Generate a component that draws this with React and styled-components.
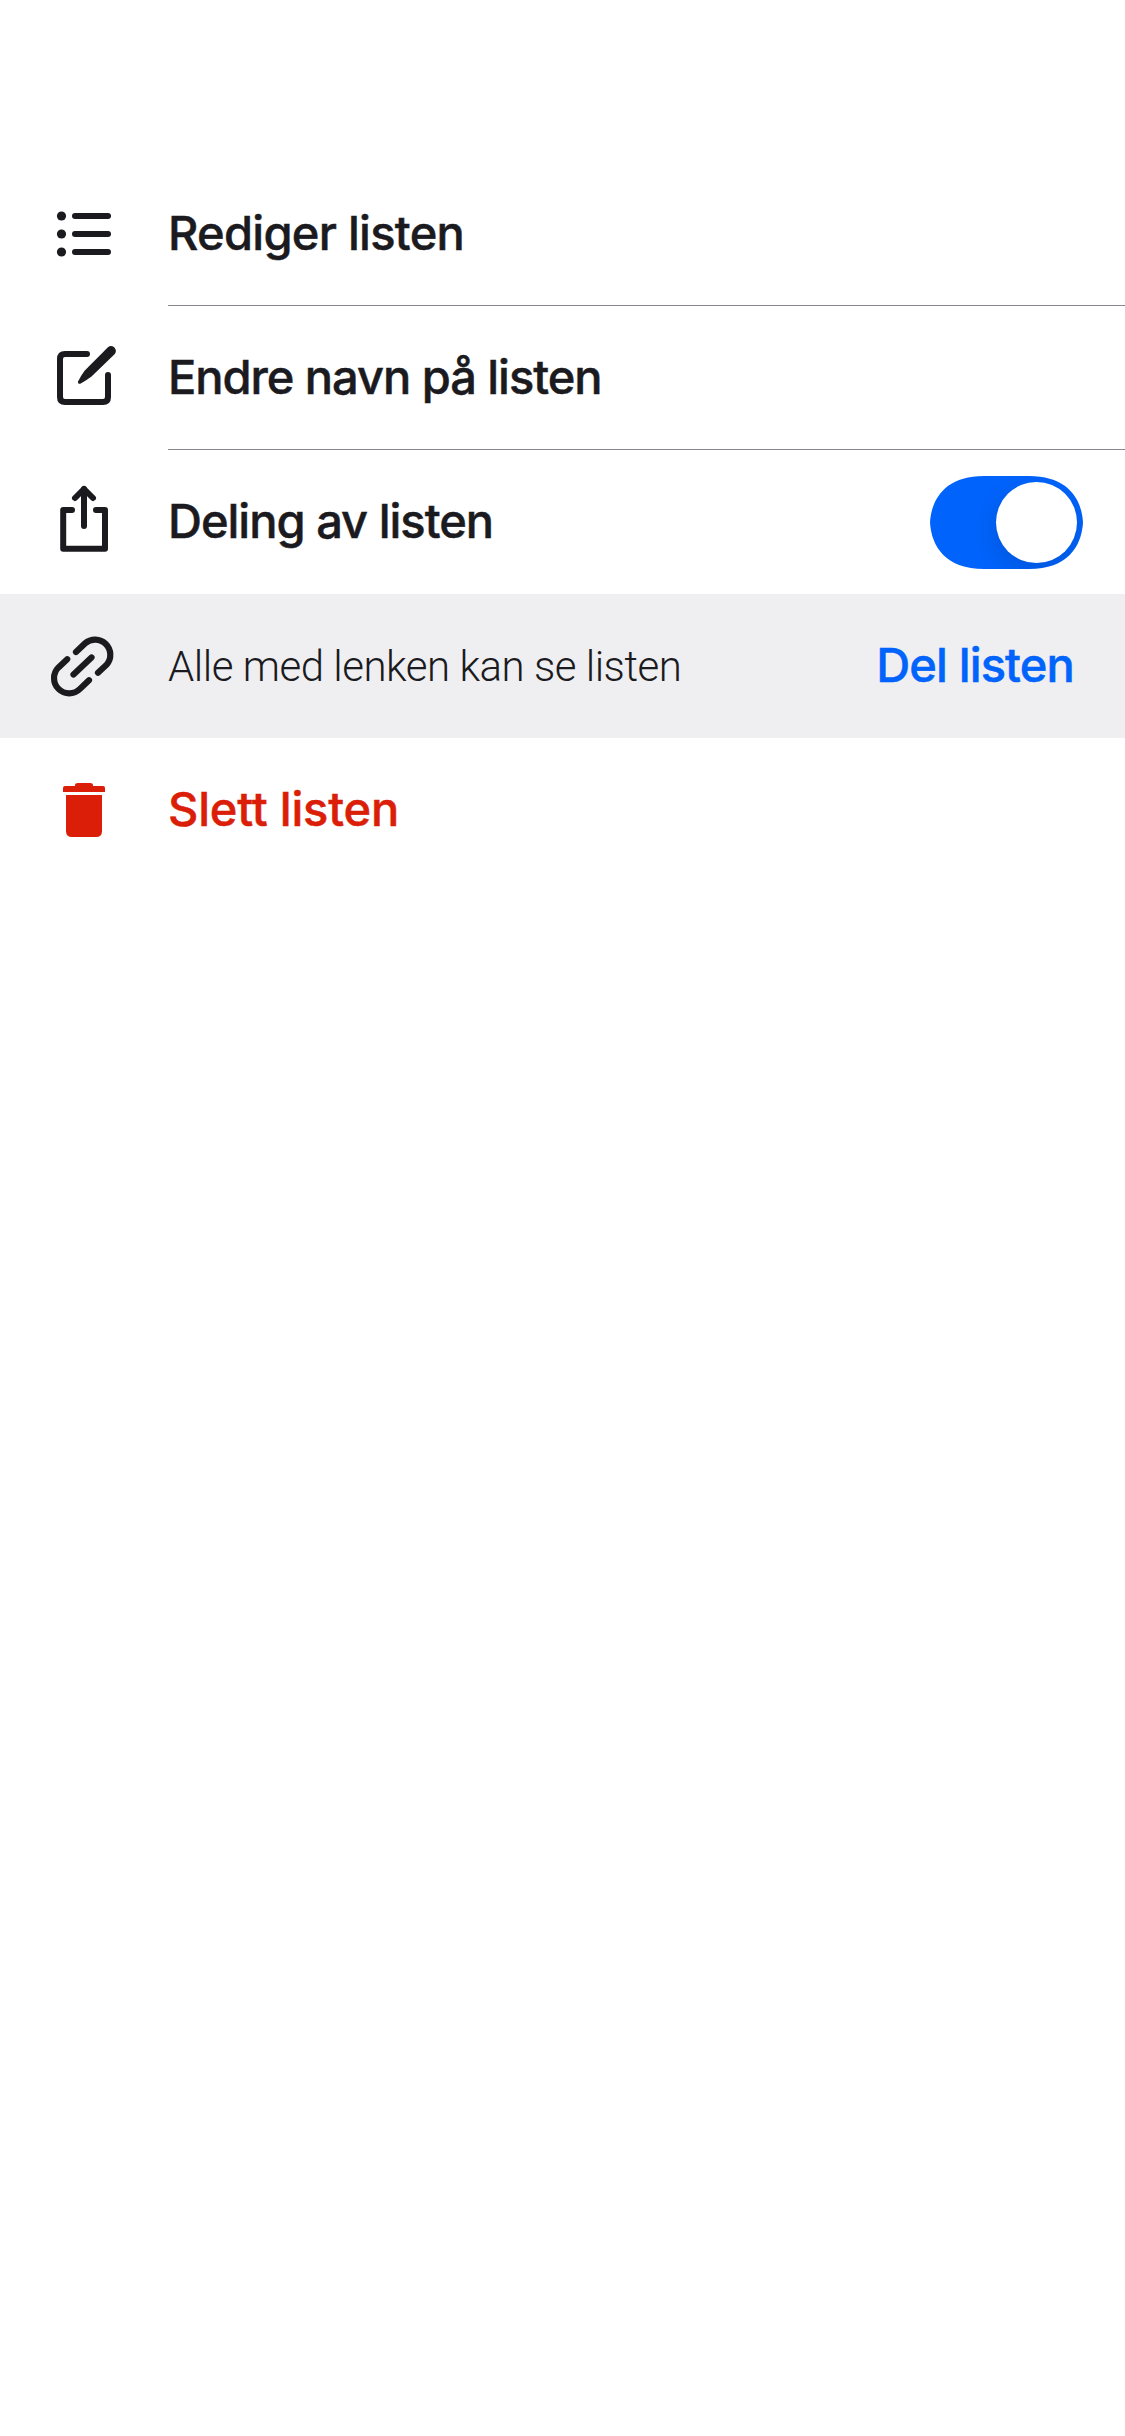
import React, { useState } from "react";
import styled, { createGlobalStyle } from "styled-components";

const GlobalStyle = createGlobalStyle`
  * { box-sizing: border-box; }
  body { margin: 0; background: #fff; }
`;

const Screen = styled.main`
  min-height: 2436px;
  padding-top: 162px;
  background: #fff;
  color: #1b1b1f;
  font-family: Inter, "Liberation Sans", sans-serif;
`;

const Menu = styled.ul`
  display: flex;
  flex-direction: column;
  margin: 0;
  padding: 0;
  list-style: none;
`;

const Row = styled.li`
  display: grid;
  grid-template-columns: 168px 1fr;
  height: 144px;
  color: ${(p) => (p.$danger ? "#da1e08" : "inherit")};
  background: ${(p) => (p.$shaded ? "#efeff1" : "transparent")};
`;

const IconCell = styled.div`
  display: flex;
  align-items: center;
  padding-left: 40px;

  svg {
    display: block;
    width: 90px;
    height: 90px;
  }
`;

const Content = styled.div`
  display: flex;
  align-items: center;
  justify-content: space-between;
  padding-right: ${(p) => p.$end || 0}px;
  border-bottom: ${(p) => (p.$divided ? "1px solid #87878e" : "0")};
`;

const Label = styled.span`
  padding-bottom: 2px;
  font-size: 47px;
  line-height: 60px;
  font-weight: 500;
  letter-spacing: ${(p) => p.$tracking || 0}px;
  -webkit-text-stroke: 0.5px currentColor;
  white-space: nowrap;
`;

const Note = styled.span`
  padding-top: 1px;
  font-family: Roboto, "Liberation Sans", sans-serif;
  font-size: 42px;
  line-height: 60px;
  font-weight: 300;
  letter-spacing: -0.48px;
  white-space: nowrap;
`;

const LinkButton = styled.button`
  padding: 0 0 2px;
  border: 0;
  background: none;
  color: #0063fb;
  font: 500 47px/60px Inter, "Liberation Sans", sans-serif;
  letter-spacing: -0.85px;
  -webkit-text-stroke: 0.5px currentColor;
  white-space: nowrap;
`;

const Switch = styled.button`
  display: flex;
  justify-content: ${(p) => (p.$on ? "flex-end" : "flex-start")};
  align-items: center;
  width: 153px;
  height: 93px;
  margin-top: 1px;
  padding: 0 6px;
  border: 0;
  clip-path: path("M0 46.5C1.5 22 16 0 54 0H99C137 0 151.5 22 153 46.5C151.5 71 137 93 99 93H54C16 93 1.5 71 0 46.5Z");
  background: ${(p) => (p.$on ? "#0063fb" : "#c3ccd9")};
`;

const Knob = styled.span`
  width: 81px;
  height: 81px;
  border-radius: 50%;
  background: #fff;
  box-shadow: 0 9px 24px rgba(0, 0, 0, 0.13);
`;

const ListIcon = () => (
  <svg viewBox="0 -1 90 90" fill="currentColor" stroke="currentColor" strokeLinecap="round">
    {[26, 44, 62].map((y) => (
      <g key={y}>
        <circle cx="21.5" cy={y} r="4.6" stroke="none" />
        <path d={`M35 ${y}H68`} strokeWidth="6" />
      </g>
    ))}
  </svg>
);

const EditIcon = () => (
  <svg viewBox="0 3 90 90" fill="none" stroke="currentColor" strokeWidth="6" strokeLinecap="round" strokeLinejoin="round">
    <path d="M47 24H25Q20 24 20 29V67Q20 72 25 72H63Q68 72 68 67V45" />
    <path d="M68.2 17.1Q71.2 14.9 74.4 17.6Q77.2 20.9 74.8 24L51.5 46.5Q46 50.8 40.3 53.7Q37.3 54.4 38.2 51.3Q40.8 45.8 44.8 40.5Z" fill="currentColor" stroke="none" />
  </svg>
);

const ShareIcon = () => (
  <svg viewBox="0 3 90 90" fill="none" stroke="currentColor" strokeWidth="6" strokeLinecap="round" strokeLinejoin="round">
    <path d="M32 36H23.2V74.7H65V36H56" />
    <path d="M44 52V15" />
    <path d="M35 24L44 15L53 24" />
  </svg>
);

const ChainIcon = () => (
  <svg viewBox="0 1 90 90" fill="none" stroke="currentColor" strokeWidth="6.2" strokeLinecap="round">
    <path d="M36 32L45 23.4A15.2 15.2 0 0 1 66.6 44.7L58 52.7" />
    <path d="M27.2 39.2L18.5 47.4A15.2 15.2 0 0 0 40 68.9L49 60.2" />
    <path d="M33.5 54.5L51.5 37.5" />
  </svg>
);

const TrashIcon = () => (
  <svg viewBox="0 0 90 90" fill="currentColor">
    <path d="M23 27V23Q23 21 25 21H35V20Q35 18 38 18H50Q53 18 53 20V21H63Q65 21 65 23V27Z" />
    <path d="M26 30H62V66Q62 72 56 72H32Q26 72 26 66Z" />
  </svg>
);

export default function App() {
  const [shared, setShared] = useState(true);
  return (
    <>
      <GlobalStyle />
      <Screen>
        <Menu>
          <Row>
            <IconCell><ListIcon /></IconCell>
            <Content $divided><Label $tracking={-0.72}>Rediger listen</Label></Content>
          </Row>
          <Row>
            <IconCell><EditIcon /></IconCell>
            <Content $divided><Label $tracking={-1.04}>Endre navn på listen</Label></Content>
          </Row>
          <Row>
            <IconCell><ShareIcon /></IconCell>
            <Content $end={42}>
              <Label $tracking={-1}>Deling av listen</Label>
              <Switch role="switch" aria-checked={shared} $on={shared} onClick={() => setShared(!shared)}>
                <Knob />
              </Switch>
            </Content>
          </Row>
          <Row $shaded>
            <IconCell><ChainIcon /></IconCell>
            <Content $end={51}>
              <Note>Alle med lenken kan se listen</Note>
              <LinkButton>Del listen</LinkButton>
            </Content>
          </Row>
          <Row $danger>
            <IconCell><TrashIcon /></IconCell>
            <Content><Label $tracking={-0.2}>Slett listen</Label></Content>
          </Row>
        </Menu>
      </Screen>
    </>
  );
}
